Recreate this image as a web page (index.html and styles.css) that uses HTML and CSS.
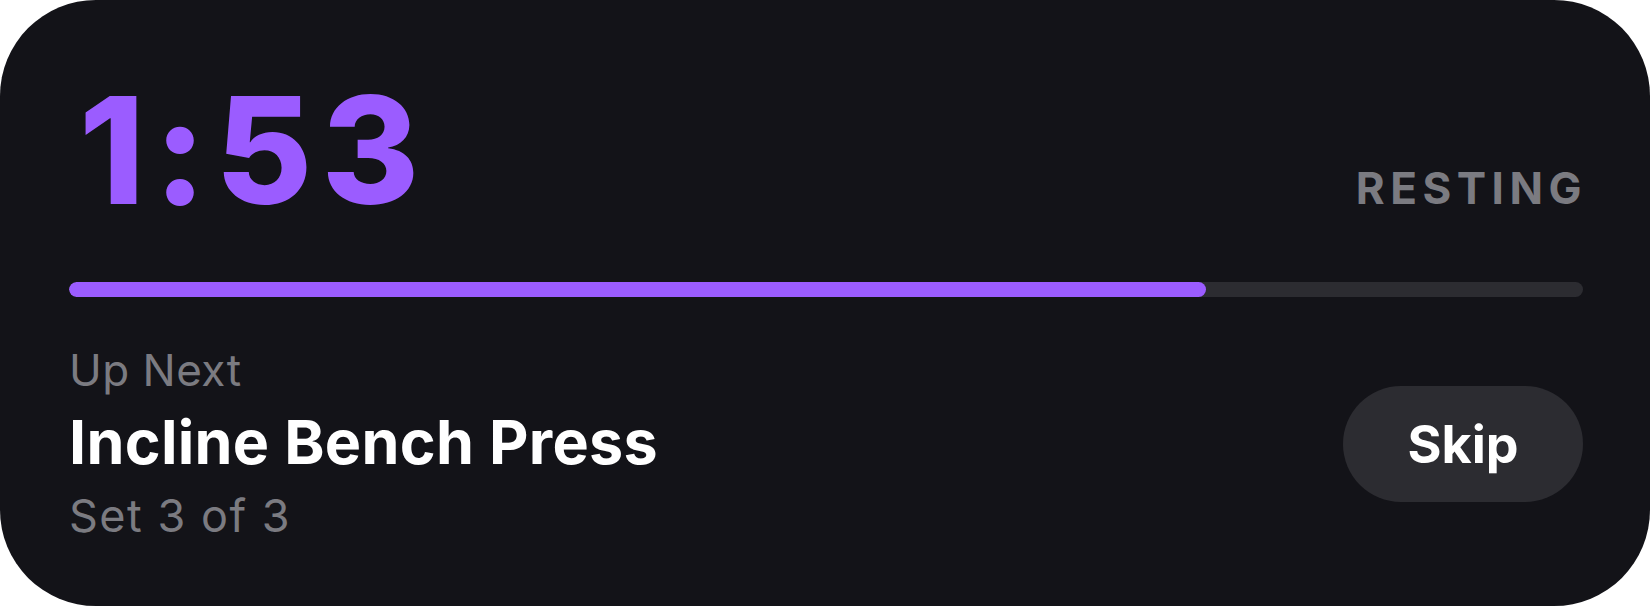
FILE: index.html
```html
<!DOCTYPE html>
<html lang="en">
<head>
<meta charset="utf-8">
<title>Rest Timer</title>
<link rel="stylesheet" href="styles.css">
</head>
<body>
<div class="card">
  <div class="top">
    <div class="timer">1:53</div>
    <div class="status">RESTING</div>
  </div>
  <div class="track"><div class="fill" style="width: 75.1%"></div></div>
  <div class="bottom">
    <div class="next">
      <div class="label">Up Next</div>
      <div class="name">Incline Bench Press</div>
      <div class="set">Set 3 of 3</div>
    </div>
    <button class="skip">Skip</button>
  </div>
</div>
</body>
</html>
```
FILE: styles.css
```css
html, body {
  margin: 0;
  padding: 0;
  background: #ffffff;
}
body {
  font-family: Inter, "Noto Sans", sans-serif;
}
.card {
  width: 1650px;
  height: 606px;
  box-sizing: border-box;
  background: #131318;
  border-radius: 96px;
  padding: 76px 67px 0 69px;
  display: flex;
  flex-direction: column;
}
.top {
  display: flex;
  justify-content: space-between;
  align-items: baseline;
}
.timer {
  font-size: 149px;
  line-height: 1;
  font-weight: 800;
  color: #9b5cff;
  margin-left: 10px;
  letter-spacing: 9px;
}
.status {
  font-size: 44px;
  font-weight: 700;
  letter-spacing: 5.5px;
  color: #7b7b81;
  margin-right: -4px;
}
.track {
  margin-top: 57px;
  height: 15px;
  border-radius: 8px;
  background: #2c2c31;
  overflow: hidden;
}
.fill {
  height: 100%;
  border-radius: 8px;
  background: #9b5cff;
}
.bottom {
  display: flex;
  justify-content: space-between;
  align-items: center;
  margin-top: 47px;
}
.label {
  font-size: 44px;
  line-height: 52px;
  color: #7b7b81;
  font-weight: 400;
  letter-spacing: 0.5px;
}
.name {
  font-size: 61px;
  line-height: 92px;
  color: #ffffff;
  font-weight: 700;
  letter-spacing: 0.3px;
}
.set {
  font-size: 45px;
  line-height: 56px;
  color: #7b7b81;
  font-weight: 400;
  letter-spacing: 1.5px;
}
.skip {
  width: 240px;
  height: 116px;
  border: none;
  border-radius: 58px;
  background: #2c2c31;
  color: #ffffff;
  font-family: Inter, "Noto Sans", sans-serif;
  font-size: 52px;
  font-weight: 700;
  padding: 0;
}
```
